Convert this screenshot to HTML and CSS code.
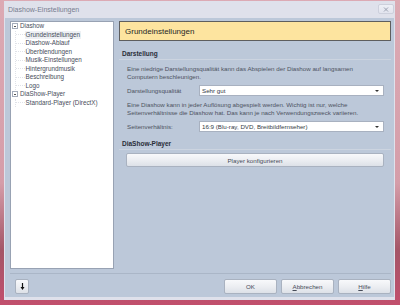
FILE: index.html
```html
<!DOCTYPE html>
<html lang="de">
<head>
    <meta charset="UTF-8">
    <title>Diashow-Einstellungen</title>
    <link rel="stylesheet" href="styles.css">
</head>
<body>
    <div class="frame">
        <div class="titlebar">
            <span class="title">Diashow-Einstellungen</span>
            <span class="close">
                <svg width="6" height="5" viewBox="0 0 6 5"><path d="M1 0.5l4 4M5 0.5l-4 4" stroke="#9aa0b0" stroke-width="1"/></svg>
            </span>
        </div>

        <div class="client">
            <div class="main">
                <div class="tree">
                    <div class="node">
                        <div class="node-label">
                            <svg class="toggle" width="6" height="6" viewBox="0 0 6 6"><rect x="0.5" y="0.5" width="5" height="5" fill="#fff" stroke="#a4acba"/><path d="M2 3.5h2" stroke="#555"/></svg>
                            <span>Diashow</span>
                        </div>
                        <ul class="children">
                            <li class="selected"><span>Grundeinstellungen</span></li>
                            <li><span>Diashow-Ablauf</span></li>
                            <li><span>Überblendungen</span></li>
                            <li><span>Musik-Einstellungen</span></li>
                            <li><span>Hintergrundmusik</span></li>
                            <li><span>Beschreibung</span></li>
                            <li><span>Logo</span></li>
                        </ul>
                    </div>
                    <div class="node">
                        <div class="node-label">
                            <svg class="toggle" width="6" height="6" viewBox="0 0 6 6"><rect x="0.5" y="0.5" width="5" height="5" fill="#fff" stroke="#a4acba"/><path d="M2 3.5h2" stroke="#555"/></svg>
                            <span>DiaShow-Player</span>
                        </div>
                        <ul class="children">
                            <li><span>Standard-Player (DirectX)</span></li>
                        </ul>
                    </div>
                </div>

                <div class="pane">
                    <div class="page-title">Grundeinstellungen</div>

                    <div class="section-title">Darstellung</div>
                    <p class="hint">Eine niedrige Darstellungsqualität kann das Abspielen der Diashow auf langsamen<br>Computern beschleunigen.</p>
                    <div class="field">
                        <span class="field-label">Darstellungsqualität</span>
                        <div class="select">
                            <span>Sehr gut</span>
                            <span class="arrow"></span>
                        </div>
                    </div>

                    <p class="hint">Eine Diashow kann in jeder Auflösung abgespielt werden. Wichtig ist nur, welche<br>Seitenverhältnisse die Diashow hat. Das kann je nach Verwendungszweck variieren.</p>
                    <div class="field">
                        <span class="field-label">Seitenverhältnis:</span>
                        <div class="select">
                            <span>16:9 (Blu-ray, DVD, Breitbildfernseher)</span>
                            <span class="arrow"></span>
                        </div>
                    </div>

                    <div class="section-title section-gap">DiaShow-Player</div>
                    <button class="btn btn-wide">Player konfigurieren</button>
                </div>
            </div>

            <div class="footer">
                <button class="btn btn-small">
                    <svg width="5" height="7" viewBox="0 0 5 7"><path d="M2.5 0v5" stroke="#111" stroke-width="1.2"/><path d="M0.5 4h4l-2 3z" fill="#111"/></svg>
                </button>
                <div class="actions">
                    <button class="btn">OK</button>
                    <button class="btn"><u>A</u>bbrechen</button>
                    <button class="btn"><u>H</u>ilfe</button>
                </div>
            </div>
        </div>
    </div>
</body>
</html>
```

FILE: styles.css
```css
:root {
    --client-bg: #bcc8d9;
    --frame-bg: #dfe1eb;
    --border: #98a2b3;
    --text: #4d5261;
    --header-bg: #fde49f;
}

* {
    box-sizing: border-box;
}

html, body {
    margin: 0;
}

body {
    width: 400px;
    height: 305px;
    overflow: hidden;
    padding: 1px 5px 0 4px;
    background: linear-gradient(to bottom, #dcaab4 0%, #d59da9 60%, #a45567 82%, #c24f6d 100%);
    font-family: "Liberation Sans", Arial, sans-serif;
    font-size: 6.2px;
    color: var(--text);
}

.frame {
    height: 299px;
    display: flex;
    flex-direction: column;
    padding: 0 1px 3px 1px;
    background-color: var(--frame-bg);
}

.titlebar {
    height: 17px;
    display: flex;
    align-items: flex-start;
    justify-content: space-between;
    padding-left: 3px;
}

.title {
    margin-top: 5px;
    font-size: 7px;
    color: #787d90;
}

.close {
    width: 16px;
    height: 10px;
    margin-top: 3px;
    display: flex;
    align-items: center;
    justify-content: center;
    border: 1px solid #cdd0dc;
    border-radius: 2px;
    background: linear-gradient(#eef0f6, #e2e4ee);
}

.client {
    flex: 1;
    display: flex;
    flex-direction: column;
    padding: 3px 3px 3px 5px;
    background-color: var(--client-bg);
}

.main {
    height: 248px;
    display: flex;
    gap: 5px;
}

/* Baum links */
.tree {
    width: 104px;
    background-color: #fff;
    border: 1px solid var(--border);
    font-size: 6.3px;
    line-height: 8.5px;
    color: #474c5a;
}

.node-label {
    display: flex;
    align-items: center;
    height: 8.5px;
    padding-left: 1px;
}

.toggle {
    margin-right: 2px;
    flex: none;
}

.children {
    list-style: none;
    margin: 0 0 0 3.5px;
    padding: 0;
    border-left: 1px dotted #e0e2e8;
}

.children li {
    display: flex;
    align-items: center;
    height: 8.5px;
}

.children li::before {
    content: "";
    width: 9px;
    margin-right: 1px;
    border-top: 1px dotted #e0e2e8;
}

.children li.selected span {
    background-color: #eef0f4;
    padding: 0 1px;
    margin-left: -1px;
}

/* Rechte Seite */
.pane {
    flex: 1;
    display: flex;
    flex-direction: column;
}

.page-title {
    height: 20px;
    display: flex;
    align-items: center;
    padding-left: 5px;
    background-color: var(--header-bg);
    border: 1px solid #5e5e5e;
    font-size: 8px;
    color: #262626;
}

.section-title {
    margin-top: 8px;
    padding: 0 0 1px 3px;
    line-height: 9px;
    font-size: 6.5px;
    font-weight: bold;
    color: #2a2e38;
    border-bottom: 1px solid #ccd4e0;
}

.section-gap {
    margin-top: 7px;
}

.hint {
    margin: 5px 0 0 0;
    padding-left: 8px;
    line-height: 8px;
}

.field {
    display: flex;
    align-items: center;
    margin: 3px 7px 0 8px;
}

.field + .hint {
    margin-top: 5px;
}

.field-label {
    width: 72px;
}

.select {
    flex: 1;
    height: 11px;
    display: flex;
    align-items: center;
    justify-content: space-between;
    padding: 0 4px 0 2px;
    background-color: #fff;
    border: 1px solid #a8b1c0;
    color: #353a46;
}

.hint + .field {
    margin-top: 4px;
}

.arrow {
    width: 0;
    height: 0;
    border-left: 2px solid transparent;
    border-right: 2px solid transparent;
    border-top: 2px solid #333;
}

.btn {
    height: 15px;
    padding: 0;
    font-family: inherit;
    font-size: 6.2px;
    color: #464b58;
    background: linear-gradient(#f8f9fb 0%, #eceef2 50%, #dde1e8 100%);
    border: 1px solid #a9b2c0;
    border-radius: 2px;
}

.btn-wide {
    height: 14px;
    margin: 3px 7px 0 7px;
}

/* Fußleiste */
.footer {
    margin-top: 4px;
    padding-top: 5px;
    border-top: 1px solid #aab6c7;
    display: flex;
    justify-content: space-between;
}

.btn-small {
    width: 14px;
    margin-left: 5px;
    display: flex;
    align-items: center;
    justify-content: center;
}

.actions {
    display: flex;
    gap: 4px;
}

.actions .btn {
    width: 53px;
}
```
